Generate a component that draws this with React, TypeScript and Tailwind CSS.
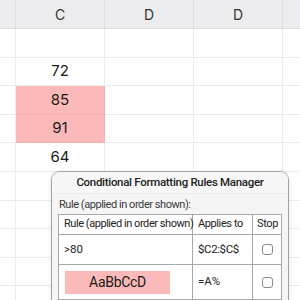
import React from "react";

const rows: { v: string; pink?: boolean }[] = [
  { v: "" },
  { v: "72" },
  { v: "85", pink: true },
  { v: "91", pink: true },
  { v: "64" },
  { v: "" },
  { v: "" },
  { v: "" },
  { v: "" },
  { v: "" },
];

function Checkbox() {
  return <div className="w-[11px] h-[11px] rounded-[3px] border border-[#8a8a8a] bg-white" />;
}

export default function App() {
  return (
    <div
      className="relative w-[300px] h-[300px] overflow-hidden bg-white text-[#222]"
      style={{ fontFamily: "Inter, 'Liberation Sans', sans-serif" }}
    >
      <div className="grid grid-cols-[16px_89px_89px_89px_1fr]">
        <div className="h-[29px] bg-[#ececee] border-r border-b border-[#dcdcde]" />
        <div className="h-[29px] bg-[#ececee] border-r border-b border-[#dcdcde] flex items-center justify-center text-[14px] text-[#333]">C</div>
        <div className="h-[29px] bg-[#ececee] border-r border-b border-[#dcdcde] flex items-center justify-center text-[14px] text-[#333]">D</div>
        <div className="h-[29px] bg-[#ececee] border-r border-b border-[#dcdcde] flex items-center justify-center text-[14px] text-[#333]">D</div>
        <div className="h-[29px] bg-[#ececee] border-b border-[#dcdcde]" />
        {rows.map((r, i) => (
          <React.Fragment key={i}>
            <div className="h-[28.6px] border-r border-b border-[#ececec]" />
            <div
              className={`h-[28.6px] border-r border-b flex items-center justify-center text-[15px] text-[#1a1a1a] ${
                r.pink ? "bg-[#fbb9b9] border-[#f4b0b0]" : "border-[#ececec]"
              }`}
            >
              {r.v}
            </div>
            <div className="h-[28.6px] border-r border-b border-[#ececec]" />
            <div className="h-[28.6px] border-r border-b border-[#ececec]" />
            <div className="h-[28.6px] border-b border-[#ececec]" />
          </React.Fragment>
        ))}
      </div>

      <div
        className="absolute left-[51px] top-[171px] w-[238px] h-[160px] rounded-[9px] border border-[#a3a3a3] bg-[#f5f5f5] shadow-[0_1px_4px_rgba(0,0,0,0.12)] overflow-hidden"
        style={{ fontFamily: "Roboto, 'Liberation Sans', sans-serif" }}
      >
        <div className="h-[22px] flex items-center justify-center text-[11.5px] font-medium tracking-[-0.3px] text-[#222] bg-[#f7f7f7] border-b border-[#ececec] whitespace-nowrap">
          Conditional Formatting Rules Manager
        </div>
        <div className="px-[6px] pt-[3px]">
          <div className="text-[11px] tracking-[-0.45px] text-[#3a3a3a] h-[17px] flex items-center px-[1px] whitespace-nowrap">Rule (applied in order shown):</div>
          <div className="grid grid-cols-[134px_60px_29px] border border-[#a8a8a8] bg-white w-[224px]">
            <div className="h-[20px] border-r border-b border-[#a8a8a8] flex items-center pl-[5px] text-[11px] tracking-[-0.45px] text-[#222] whitespace-nowrap">Rule (applied in order shown)</div>
            <div className="h-[20px] border-r border-b border-[#a8a8a8] flex items-center pl-[5px] text-[11px] tracking-[-0.4px] text-[#222] whitespace-nowrap">Applies to</div>
            <div className="h-[20px] border-b border-[#a8a8a8] flex items-center justify-center text-[11px] tracking-[-0.4px] text-[#222]">Stop</div>

            <div className="h-[30px] border-r border-b border-[#a8a8a8] flex items-center pl-[5px] text-[11.5px] text-[#222]">&gt;80</div>
            <div className="h-[30px] border-r border-b border-[#a8a8a8] flex items-center pl-[5px] text-[11.5px] tracking-[-0.4px] text-[#222]">$C2:$C$</div>
            <div className="h-[30px] border-b border-[#a8a8a8] flex items-center justify-center"><Checkbox /></div>

            <div className="h-[34px] border-r border-[#a8a8a8] flex items-center pl-[6px]">
              <div className="w-[105px] h-[23px] bg-[#fbb9b9] flex items-center justify-center text-[14px] tracking-[-0.3px] text-[#1a1a1a]">AaBbCcD</div>
            </div>
            <div className="h-[34px] border-r border-[#a8a8a8] flex items-center pl-[5px] text-[11.5px] text-[#222]">=A%</div>
            <div className="h-[34px] flex items-center justify-center"><Checkbox /></div>
          </div>
        </div>
      </div>
    </div>
  );
}
